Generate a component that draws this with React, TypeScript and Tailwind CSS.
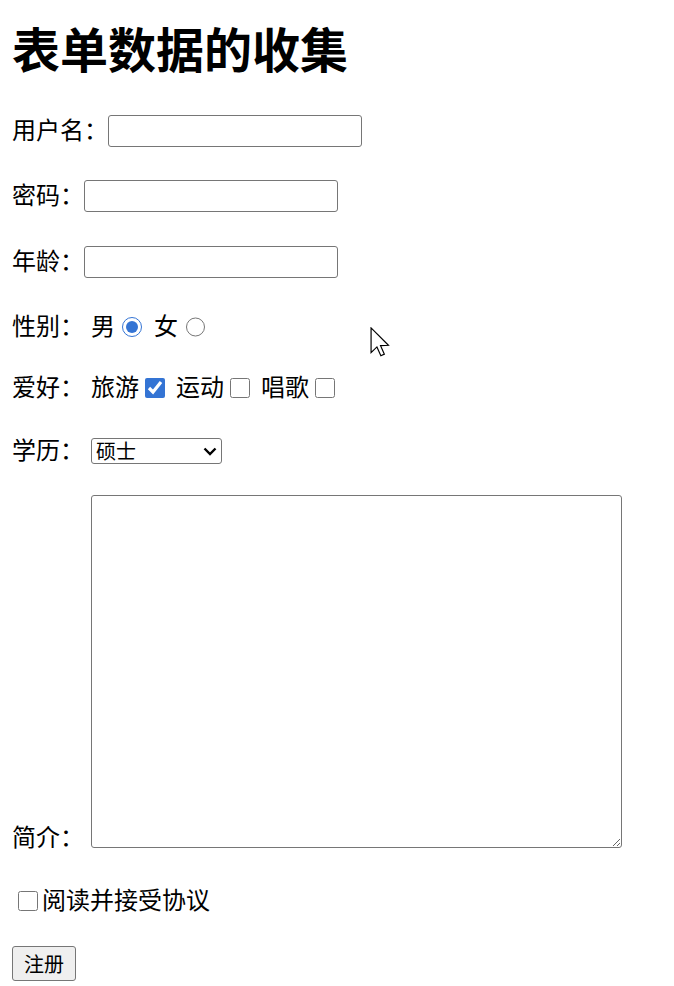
import React from 'react';

const font = "font-['Noto_Sans_CJK_SC','Microsoft_YaHei',sans-serif]";

const inputCls = 'w-[254px] h-[32px] border border-[#767676] rounded-[3px] bg-white outline-none px-[3px] text-[20px]';

const Cursor = () => (
  <svg className="absolute left-[370px] top-[327px]" width="20" height="30" viewBox="0 0 12.5 19">
    <path
      d="M0.6 0.6 L0.6 16.2 L4.3 12.6 L6.8 18.2 L9 17.2 L6.6 11.8 L11.6 11.6 Z"
      fill="#fff"
      stroke="#000"
      strokeWidth="0.75"
      strokeLinejoin="miter"
    />
  </svg>
);

const App: React.FC = () => {
  return (
    <div className={`relative min-h-[986px] bg-white text-black px-[12px] ${font}`}>
      <h1 className="pt-[23px] h-[71px] text-[48px] leading-[48px] font-bold">表单数据的收集</h1>

      <form className="flex flex-col text-[24px]" onSubmit={(e) => e.preventDefault()}>
        {/* text inputs */}
        <div className="mt-[44px] h-[32px] flex items-center">
          <span className="leading-[32px] mb-[4px]">用户名：</span>
          <input type="text" className={inputCls} />
        </div>
        <div className="mt-[33px] h-[32px] flex items-center">
          <span className="leading-[32px] mb-[4px]">密码：</span>
          <input type="password" className={inputCls} />
        </div>
        <div className="mt-[34px] h-[32px] flex items-center">
          <span className="leading-[32px] mb-[4px]">年龄：</span>
          <input type="number" className={inputCls} />
        </div>

        {/* gender */}
        <div className="mt-[33px] h-[32px] flex items-center">
          <span className="leading-[32px] mb-[4px]">性别：</span>
          <span className="ml-[7px] leading-[32px] mb-[4px]">男</span>
          <input type="radio" name="sex" defaultChecked className="ml-[7px] w-[19.5px] h-[19.5px] accent-[#3474d4]" />
          <span className="ml-[12.5px] leading-[32px] mb-[4px]">女</span>
          <input type="radio" name="sex" className="ml-[7.5px] w-[19.5px] h-[19.5px] accent-[#3474d4]" />
        </div>

        {/* hobbies */}
        <div className="mt-[29px] h-[32px] flex items-center">
          <span className="leading-[32px] mb-[4px]">爱好：</span>
          <span className="ml-[7px] leading-[32px] mb-[4px]">旅游</span>
          <input type="checkbox" defaultChecked className="ml-[6px] w-[19.5px] h-[19.5px] accent-[#3474d4]" />
          <span className="ml-[11.5px] leading-[32px] mb-[4px]">运动</span>
          <input type="checkbox" className="ml-[6px] w-[19.5px] h-[19.5px] accent-[#3474d4]" />
          <span className="ml-[11.5px] leading-[32px] mb-[4px]">唱歌</span>
          <input type="checkbox" className="ml-[6px] w-[19.5px] h-[19.5px] accent-[#3474d4]" />
        </div>

        {/* education */}
        <div className="mt-[31px] h-[32px] flex items-center">
          <span className="leading-[32px] mb-[4px]">学历：</span>
          <div className="relative ml-[7px] flex">
            <select
              defaultValue="硕士"
              className="appearance-none w-[131px] h-[26px] border border-[#767676] rounded-[3px] bg-white pl-[4px] text-[20px] leading-[24px] outline-none"
            >
              <option>高中</option>
              <option>本科</option>
              <option>硕士</option>
              <option>博士</option>
            </select>
            <svg className="absolute right-[5px] top-[9px] pointer-events-none" width="14" height="9" viewBox="0 0 14 9">
              <path d="M1.5 1.5 L7 7 L12.5 1.5" fill="none" stroke="#000" strokeWidth="2.4" />
            </svg>
          </div>
        </div>

        {/* intro */}
        <div className="mt-[28px] flex items-end">
          <span className="leading-[24px]">简介：</span>
          <textarea className="ml-[7px] w-[531px] h-[353px] border border-[#767676] rounded-[3px] bg-white outline-none" />
        </div>

        {/* agreement */}
        <div className="mt-[37px] h-[32px] flex items-center">
          <input type="checkbox" className="ml-[6px] w-[19.5px] h-[19.5px] accent-[#3474d4]" />
          <span className="ml-[4.5px] leading-[32px] mb-[4px]">阅读并接受协议</span>
        </div>

        <div className="mt-[29px] flex">
          <button className="w-[64px] h-[35px] border border-[#767676] rounded-[3px] bg-[#efefef] text-[20px] leading-[24px]">
            注册
          </button>
        </div>
      </form>

      <Cursor />
    </div>
  );
};

export default App;
